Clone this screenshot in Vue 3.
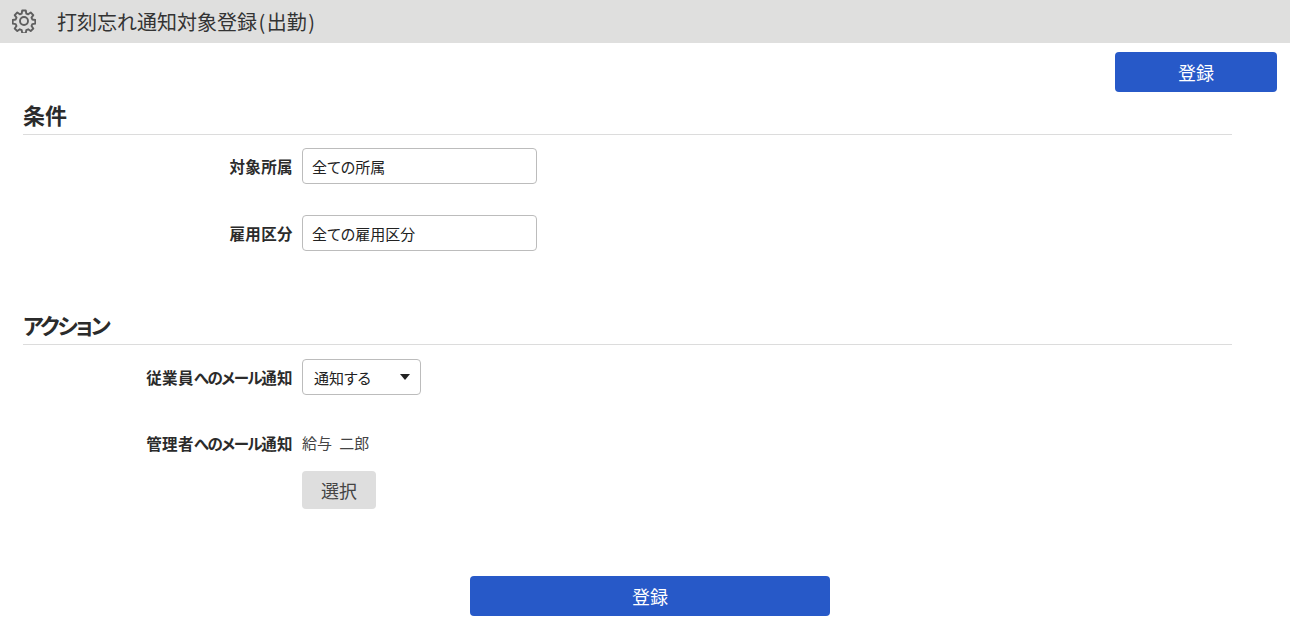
<script setup>
</script>

<template>
  <div class="page">
    <header class="titlebar">
      <svg class="gear" viewBox="0 0 24 24" width="24" height="24" aria-hidden="true">
        <path d="M10.2 1.5h3.6l.5 3 1.9.8 2.5-1.8 2.6 2.6-1.8 2.5.8 1.9 3 .5v3.6l-3 .5-.8 1.9 1.8 2.5-2.6 2.6-2.5-1.8-1.9.8-.5 3h-3.6l-.5-3-1.9-.8-2.5 1.8-2.6-2.6 1.8-2.5-.8-1.9-3-.5v-3.6l3-.5.8-1.9-1.8-2.5 2.6-2.6 2.5 1.8 1.9-.8z" fill="none" stroke="#5f5f5f" stroke-width="1.9" stroke-linejoin="round"/>
        <circle cx="12" cy="12" r="4" fill="none" stroke="#5f5f5f" stroke-width="1.9"/>
      </svg>
      <h1 class="title">打刻忘れ通知対象登録<span class="paren">(</span>出勤<span class="paren">)</span></h1>
    </header>

    <div class="top-actions">
      <button class="primary small" type="button">登録</button>
    </div>

    <section class="section first">
      <h2 class="section-title">条件</h2>
      <div class="row row-input">
        <label class="label">対象所属</label>
        <input class="text" value="全ての所属" />
      </div>
      <div class="row row-input second">
        <label class="label">雇用区分</label>
        <input class="text" value="全ての雇用区分" />
      </div>
    </section>

    <section class="section action">
      <h2 class="section-title katakana">アクション</h2>
      <div class="row row-input">
        <label class="label">従業員<span class="kana">へのメール</span>通知</label>
        <div class="select">
          <span>通知する</span>
          <i class="caret"></i>
        </div>
      </div>
      <div class="row row-admin">
        <label class="label">管理者<span class="kana">へのメール</span>通知</label>
        <div class="admin">
          <span class="name">給与 二郎</span>
          <button class="ghost" type="button">選択</button>
        </div>
      </div>
    </section>

    <div class="bottom-actions">
      <button class="primary wide" type="button">登録</button>
    </div>
  </div>
</template>

<style>
html, body { margin: 0; background: #fff; }
</style>

<style scoped>
.page {
  width: 1290px;
  height: 633px;
  overflow: hidden;
  background: #fff;
  color: #333;
  font-family: "Noto Sans CJK JP", "Noto Sans", sans-serif;
  font-feature-settings: "palt";
}
.titlebar {
  height: 43px;
  background: #dfdfde;
  display: flex;
  align-items: center;
  padding-left: 12px;
  box-sizing: border-box;
}
.gear { flex: none; margin-bottom: 2px; }
.title {
  margin: 1px 0 0 21px;
  font-size: 20px;
  font-weight: 400;
  line-height: 42px;
  color: #333;
  font-feature-settings: normal;
}
.paren { padding: 0 1.5px; }
.top-actions {
  display: flex;
  justify-content: flex-end;
  padding: 9px 13px 0 0;
}
button {
  font-family: inherit;
  font-feature-settings: inherit;
  border: 0;
  padding: 0;
}
.primary {
  background: #2759c8;
  color: #fff;
  font-size: 18px;
  border-radius: 4px;
  height: 40px;
}
.small { width: 162px; }
.wide { width: 360px; }
.section {
  margin-left: 23px;
  width: 1209px;
}
.first { margin-top: 9px; }
.action { margin-top: 60px; }
.section-title {
  margin: 0;
  height: 34px;
  box-sizing: border-box;
  border-bottom: 1px solid #dcdcdc;
  font-size: 22px;
  font-weight: 700;
  line-height: 26px;
  color: #2b2b2b;
}
.katakana { letter-spacing: -2.4px; }
.row {
  display: flex;
  gap: 9px;
}
.label {
  width: 270px;
  text-align: right;
  font-size: 15.5px;
  letter-spacing: 0.4px;
  font-weight: 700;
  color: #2b2b2b;
  flex: none;
  line-height: 24px;
}
.kana { letter-spacing: -1.4px; }
.row-input {
  align-items: center;
  margin-top: 13px;
}
.first .second { margin-top: 31px; }
.action .row-input { margin-top: 14px; }
.text {
  width: 235px;
  height: 36px;
  box-sizing: border-box;
  border: 1px solid #bcbcbc;
  border-radius: 4px;
  padding: 0 9px;
  font: 400 15px "Noto Sans CJK JP", sans-serif;
  font-feature-settings: "palt";
  color: #222;
  outline: none;
}
.select {
  width: 119px;
  height: 36px;
  box-sizing: border-box;
  border: 1px solid #bcbcbc;
  border-radius: 4px;
  padding: 0 10px 0 11px;
  display: flex;
  align-items: center;
  justify-content: space-between;
  font-size: 15px;
  color: #222;
}
.caret {
  width: 0;
  height: 0;
  border-left: 5px solid transparent;
  border-right: 5px solid transparent;
  border-top: 6px solid #222;
}
.row-admin {
  margin-top: 38px;
  align-items: flex-start;
}
.row-admin .label { line-height: 20px; }
.admin {
  display: flex;
  flex-direction: column;
  align-items: flex-start;
}
.name {
  font-size: 15px;
  line-height: 20px;
  word-spacing: 4px;
  color: #444;
  margin-bottom: 2px;
}
.ghost {
  margin-top: 16px;
  width: 74px;
  height: 38px;
  background: #dedede;
  border-radius: 4px;
  color: #444;
  font-size: 18px;
}
.bottom-actions {
  display: flex;
  justify-content: center;
  padding-left: 10px;
  margin-top: 67px;
}
</style>
